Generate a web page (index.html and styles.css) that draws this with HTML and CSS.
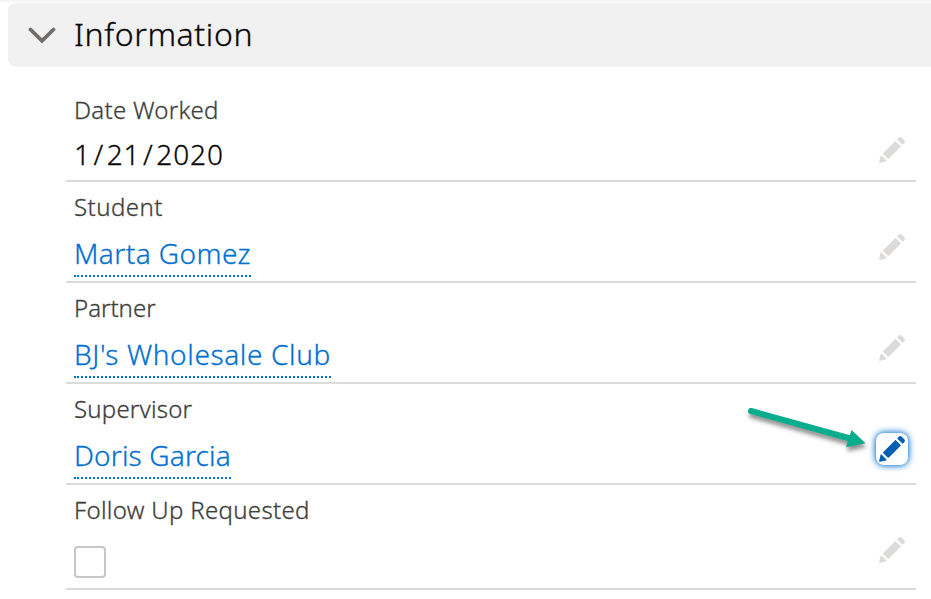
FILE: index.html
```html
<!DOCTYPE html>
<html lang="en">
<head>
<meta charset="utf-8">
<title>Information</title>
<link rel="stylesheet" href="styles.css">
</head>
<body>
<svg class="sprite" aria-hidden="true">
  <symbol id="edit" viewBox="0 0 52 52"><path d="M9.5 33.4l8.9 8.9c.4.4 1 .4 1.4 0L42 20c.4-.4.4-1 0-1.4l-8.8-8.8c-.4-.4-1-.4-1.4 0L9.5 32.1c-.4.4-.4 1 0 1.3zM36.1 5.7c-.4.4-.4 1 0 1.4l8.8 8.8c.4.4 1 .4 1.4 0l2.5-2.5c1.6-1.5 1.6-3.9 0-5.5l-4.7-4.7c-1.6-1.6-4.1-1.6-5.7 0l-2 2.5zM2.1 48.2c-.2 1 .7 1.9 1.7 1.7l10.9-2.6c.4-.1.7-.3.9-.5l.2-.2c.2-.2.3-.9-.1-1.3l-9-9c-.4-.4-1.1-.3-1.3-.1l-.2.2c-.3.3-.4.6-.5.9L2.1 48.2z"/></symbol>
</svg>
<section class="panel">
  <h3 class="section-header">
    <svg class="chevron" viewBox="0 0 28 18"><path d="M2.5 3.5L14 14.8L25.5 3.5"/></svg>
    <span class="title">Information</span>
  </h3>
  <div class="fields">
    <div class="field field-first">
      <div class="label l-date">Date Worked</div>
      <div class="value v-date">1<span class="slash">/</span>21<span class="slash">/</span>2020</div>
      <button class="edit" aria-label="Edit"><svg><use href="#edit"/></svg></button>
    </div>
    <div class="field">
      <div class="label l-student">Student</div>
      <a class="value link v-student">Marta Gomez</a>
      <button class="edit" aria-label="Edit"><svg><use href="#edit"/></svg></button>
    </div>
    <div class="field">
      <div class="label l-partner">Partner</div>
      <a class="value link v-partner">BJ's Wholesale Club</a>
      <button class="edit" aria-label="Edit"><svg><use href="#edit"/></svg></button>
    </div>
    <div class="field">
      <div class="label l-supervisor">Supervisor</div>
      <a class="value link v-supervisor">Doris Garcia</a>
      <button class="edit focused" aria-label="Edit"><svg><use href="#edit"/></svg></button>
    </div>
    <div class="field field-last">
      <div class="label l-follow">Follow Up Requested</div>
      <span class="checkbox"></span>
      <button class="edit" aria-label="Edit"><svg><use href="#edit"/></svg></button>
    </div>
  </div>
</section>
<svg class="arrow" viewBox="0 0 130 60">
  <path class="shaft" d="M11 11L110 38.5"/>
  <path class="head" d="M111.5 30L125.5 43.3L106 47.3Z"/>
</svg>
</body>
</html>
```
FILE: styles.css
```css
* { box-sizing: border-box; }
body {
  margin: 0;
  height: 599px;
  overflow: hidden;
  background: #fff linear-gradient(#f3f3f3, #fdfdfd) no-repeat 0 0 / 100% 3px;
  font-family: "Noto Sans", "Open Sans", sans-serif;
  font-weight: 300;
  -webkit-text-stroke: 0.3px currentColor;
}
.sprite { position: absolute; width: 0; height: 0; }
.panel { padding: 3px 0 0 8px; }
.section-header {
  display: flex;
  align-items: center;
  height: 64px;
  margin: 0;
  padding-left: 20px;
  background: #f1f1f1;
  border-radius: 8px 0 0 8px;
  font-size: 32px;
  font-weight: 300;
  line-height: 62px;
  color: #080707;
}
.chevron { width: 28px; height: 18px; margin-right: 18px; }
.chevron path { fill: none; stroke: #706e6b; stroke-width: 3.8; stroke-linecap: round; stroke-linejoin: miter; }
.title { height: 64px; letter-spacing: 0.6px; }
.fields { padding: 18px 15px 0 58px; }
.field {
  position: relative;
  height: 101px;
  padding: 8px 8px 0;
  border-bottom: 2px solid #dddbda;
}
.field-first { height: 97px; }
.field-last { height: 105px; }
.label {
  height: 36px;
  font-size: 24px;
  line-height: 34px;
  color: #3e3e3c;
  white-space: nowrap;
}
.l-date { letter-spacing: 0.27px; }
.l-student { letter-spacing: 0.45px; }
.l-partner { letter-spacing: 0; }
.l-supervisor { letter-spacing: 0.2px; }
.l-follow { letter-spacing: 0.32px; }
.value {
  display: block;
  width: max-content;
  font-size: 28px;
  line-height: 40px;
  color: #080707;
  white-space: nowrap;
}
.v-date { margin-top: 5px; letter-spacing: 0.9px; }
.slash { margin: 0 2.6px; }
.v-student { letter-spacing: 0.43px; }
.v-partner { letter-spacing: 0.62px; }
.v-supervisor { letter-spacing: 0.16px; }
.link {
  height: 43px;
  margin-top: 8px;
  line-height: 39px;
  color: #0070d2;
  border-bottom: 2px dotted #0070d2;
}
.checkbox {
  display: block;
  width: 32px;
  height: 32px;
  margin-top: 17px;
  border: 2px solid #c9c7c5;
  border-radius: 4px;
}
.edit {
  position: absolute;
  right: 8px;
  bottom: 18px;
  width: 32px;
  height: 32px;
  display: flex;
  align-items: center;
  justify-content: center;
  padding: 0;
  border: 0;
  border-radius: 8px;
  background: #fff;
  color: #dddbda;
}
.field-first .edit { bottom: 14px; }
.field-last .edit { bottom: 22px; }
.edit svg { width: 28px; height: 28px; fill: currentColor; filter: blur(0.7px); }
.edit.focused { color: #005fb2; box-shadow: 0 0 6px 1px #0070d2; }
.arrow { position: absolute; left: 740px; top: 400px; width: 130px; height: 60px; overflow: visible; filter: drop-shadow(1px 4px 2px rgba(0,0,0,.45)); }
.shaft { stroke: #08ad8d; stroke-width: 6; stroke-linecap: round; fill: none; }
.head { fill: #08ad8d; }
```
